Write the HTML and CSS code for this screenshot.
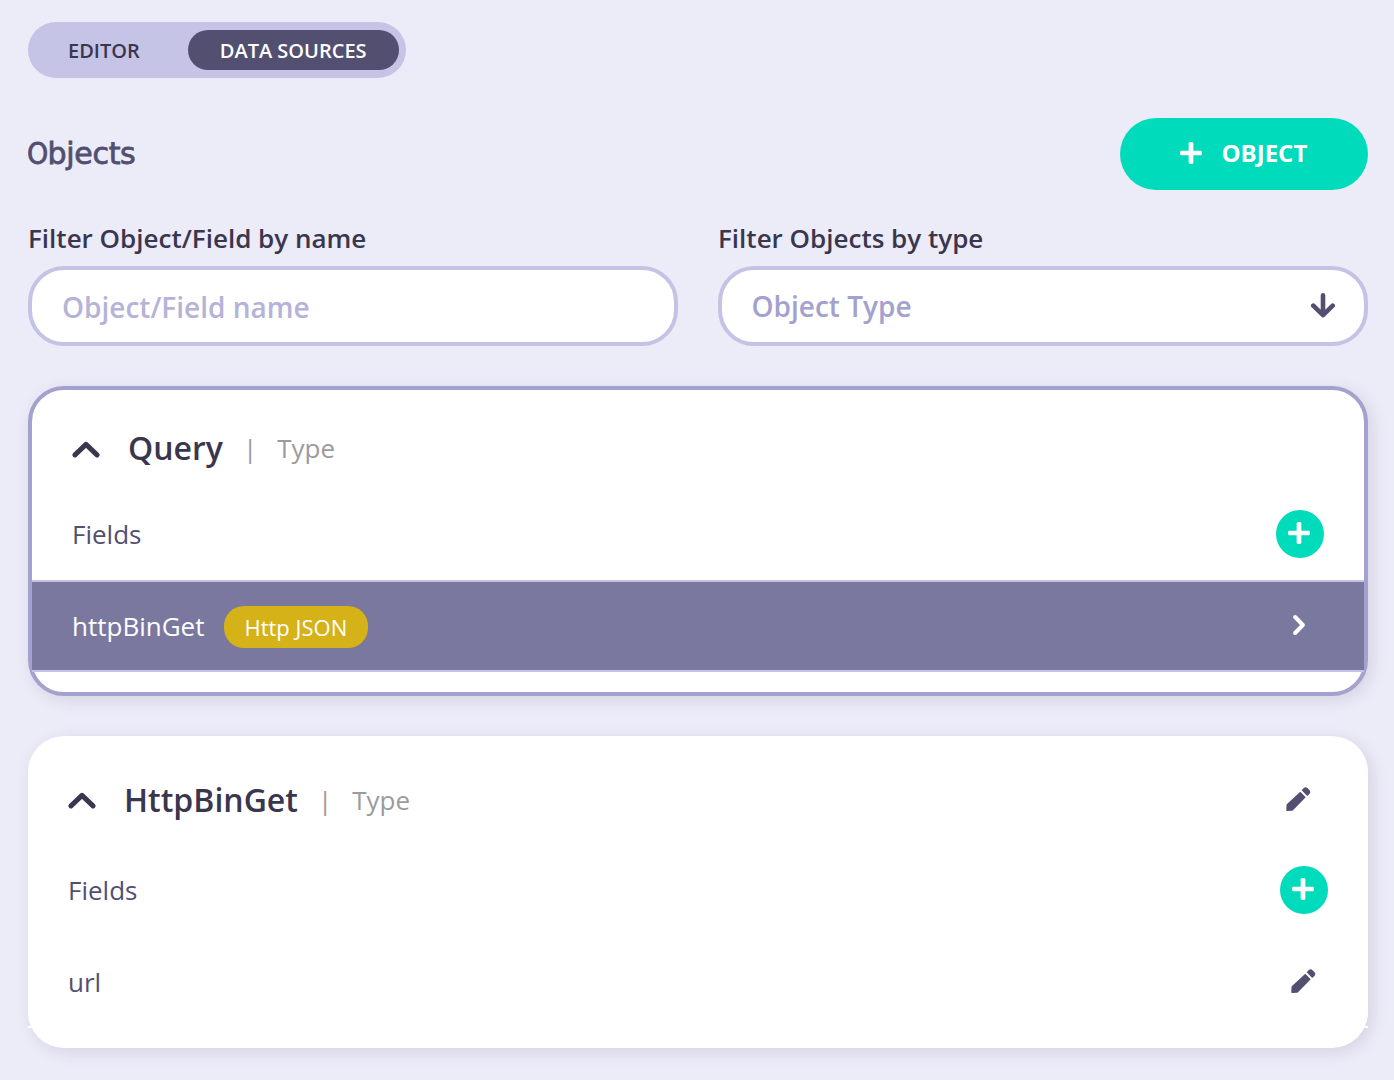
FILE: index.html
```html
<!DOCTYPE html>
<html lang="en">
<head>
<meta charset="utf-8">
<title>Data sources</title>
<link rel="stylesheet" href="styles.css">
</head>
<body>
<svg class="defs" aria-hidden="true">
  <symbol id="plus" viewBox="0 0 448 448"><path d="M416 176H272V32c0-17.670-14.330-32-32-32h-32c-17.670 0-32 14.330-32 32v144H32c-17.670 0-32 14.330-32 32v32c0 17.670 14.330 32 32 32h144v144c0 17.670 14.330 32 32 32h32c17.670 0 32-14.330 32-32V272h144c17.670 0 32-14.330 32-32v-32c0-17.670-14.330-32-32-32z" fill="currentColor"/></symbol>
  <symbol id="chevron" viewBox="0 0 28 18"><path d="M3 14.900L14 4.400l11 10.500" fill="none" stroke="currentColor" stroke-width="5" stroke-linecap="round" stroke-linejoin="round"/></symbol>
  <symbol id="pencil" viewBox="0 0 25 24"><path d="M14.300 4.700L19.700 10.300 7 23.200Q6.500 23.700 5.800 23.700L1 24Q.3 24 .3 23.200L.5 18Q.5 17.500 1 17zM15.700 3.300L17.600 1.200Q19.500-.8 21.300 1L23.400 3.100Q25.200 5 23.400 6.900L21.200 9z" fill="currentColor"/></symbol>
</svg>
<main class="page">
  <nav class="tabs">
    <a class="tab">EDITOR</a>
    <a class="tab tab-active">DATA SOURCES</a>
  </nav>
  <header class="heading">
    <h1 class="title"><span class="initial">O</span>bjects</h1>
    <button class="add-object"><svg class="plus"><use href="#plus"/></svg><span>OBJECT</span></button>
  </header>
  <section class="filters">
    <div class="filter">
      <label class="label" for="name">Filter Object/Field by name</label>
      <input class="control" id="name" placeholder="Object/Field name">
    </div>
    <div class="filter">
      <span class="label">Filter Objects by type</span>
      <div class="control select"><span>Object Type</span>
        <svg class="arrow" viewBox="0 0 24 26"><path d="M12 2.300V22M2.300 12.700L12 22.200l9.700-9.500" fill="none" stroke="currentColor" stroke-width="4.600" stroke-linecap="round" stroke-linejoin="round"/></svg>
      </div>
    </div>
  </section>
  <section class="card card-selected">
    <div class="card-head">
      <svg class="chevron"><use href="#chevron"/></svg>
      <h2 class="name">Query</h2><span class="bar">|</span><span class="kind">Type</span>
    </div>
    <div class="row"><span>Fields</span><button class="add"><svg class="plus"><use href="#plus"/></svg></button></div>
    <div class="row row-active"><span>httpBinGet</span><span class="badge">Http JSON</span>
      <svg class="next" viewBox="0 0 14 22"><path d="M3.100 3L10.900 11l-7.800 8" fill="none" stroke="currentColor" stroke-width="4" stroke-linecap="round" stroke-linejoin="round"/></svg>
    </div>
  </section>
  <section class="card">
    <div class="card-head">
      <svg class="chevron"><use href="#chevron"/></svg>
      <h2 class="name">HttpBinGet</h2><span class="bar">|</span><span class="kind">Type</span>
      <svg class="pencil pencil-head"><use href="#pencil"/></svg>
    </div>
    <div class="row"><span>Fields</span><button class="add"><svg class="plus"><use href="#plus"/></svg></button></div>
    <div class="row"><span>url</span><svg class="pencil"><use href="#pencil"/></svg></div>
  </section>
</main>
</body>
</html>
```
FILE: styles.css
```css
* { box-sizing: border-box; }
body {
  margin: 0;
  background: #ecebf8;
  color: #524f70;
  font-family: "Open Sans", sans-serif;
  overflow: hidden;
}
button { border: 0; padding: 0; font: inherit; color: #fff; background: #00dbbc; }
svg { flex: none; }
.defs { display: none; }
.page { height: 1080px; padding: 22px 26px 0 28px; }
.tabs {
  display: flex;
  gap: 16px;
  width: 378px;
  height: 56px;
  padding: 8px;
  border-radius: 28px;
  background: #c5c3e6;
}
.tab {
  display: flex;
  align-items: center;
  padding: 0 32px;
  border-radius: 20px;
  color: #3a364e;
  font-size: 20px;
  font-weight: 600;
  white-space: nowrap;
}
.tab-active { flex: 1; background: #524f70; color: #fff; }
.heading { display: flex; justify-content: space-between; align-items: center; height: 72px; margin-top: 40px; }
.title {
  margin: 0;
  font: 400 30px/40px "DejaVu Sans", sans-serif;
  letter-spacing: -0.3px;
  -webkit-text-stroke: 0.8px #524f70;
}
.initial {
  display: inline-block;
  width: 21px;
  margin-left: -1.500px;
  transform: scaleX(0.9);
  transform-origin: left;
}
.add-object {
  display: flex;
  align-items: center;
  gap: 20px;
  width: 248px;
  height: 72px;
  padding: 0 0 2px 59.500px;
  border-radius: 36px;
  font-size: 24px;
  line-height: 32px;
  font-weight: 700;
}
.add-object span { padding-bottom: 1px; }
.plus { width: 22px; height: 22px; }
.filters { display: grid; grid-template-columns: 1fr 1fr; gap: 40px; margin-top: 30px; }
.filter { display: flex; flex-direction: column; }
.label { height: 46px; color: #3a364e; font-size: 26px; line-height: 36px; font-weight: 600; }
.control {
  width: 100%;
  height: 80px;
  padding: 2px 30px 0;
  border: 4px solid #c4c3e6;
  border-radius: 36px;
  background: #fff;
  color: #a3a1cd;
  font: 600 28px "Open Sans", sans-serif;
}
.control::placeholder { color: #b5b3d7; opacity: 1; }
.select { display: flex; align-items: center; justify-content: space-between; padding: 0 29px 0 29.500px; }
.select span { padding-bottom: 1px; }
.arrow { width: 24px; height: 26px; color: #524f70; }
.card {
  margin-top: 40px;
  padding: 20px 0;
  border-radius: 36px;
  background: #fff;
  box-shadow: 4px 4px 16px rgba(58, 54, 78, 0.13);
}
.card-selected { border: 4px solid #a3a1cd; }
.card-head { display: flex; align-items: center; height: 88px; padding: 0 40px; }
.card-selected .card-head { height: 78px; padding-bottom: 2px; }
.chevron { width: 28px; height: 18px; margin-right: 28px; color: #3a364e; }
.card-selected .chevron { margin-top: 2px; }
.name { margin: 0; color: #3a364e; font-size: 32px; line-height: 44px; font-weight: 600; }
.bar, .kind { color: #9b9b9b; font-size: 26px; line-height: 36px; }
.bar { margin: 0 20px; }
.row {
  display: flex;
  align-items: center;
  height: 92px;
  padding: 0 40px;
  border-top: 2px solid #fff;
  border-bottom: 2px solid #fff;
  font-size: 26px;
  line-height: 36px;
}
.row-active { border-color: #c4c3e6; background: #7a789f; color: #fff; }
.add {
  display: flex;
  align-items: center;
  justify-content: center;
  width: 48px;
  height: 48px;
  margin-left: auto;
  padding: 0 1.500px 2px 0;
  border-radius: 50%;
}
.badge {
  width: 144px;
  height: 42px;
  margin: 2px 0 0 20px;
  padding-left: 20px;
  border-radius: 20px;
  background: #d6b219;
  font-size: 22px;
  line-height: 42px;
}
.next { width: 14px; height: 22px; margin: 0 18px 2px auto; }
.pencil { width: 25px; height: 24px; margin: 0 12px 2px auto; color: #524f70; }
.pencil-head { margin-right: 17px; }
```
